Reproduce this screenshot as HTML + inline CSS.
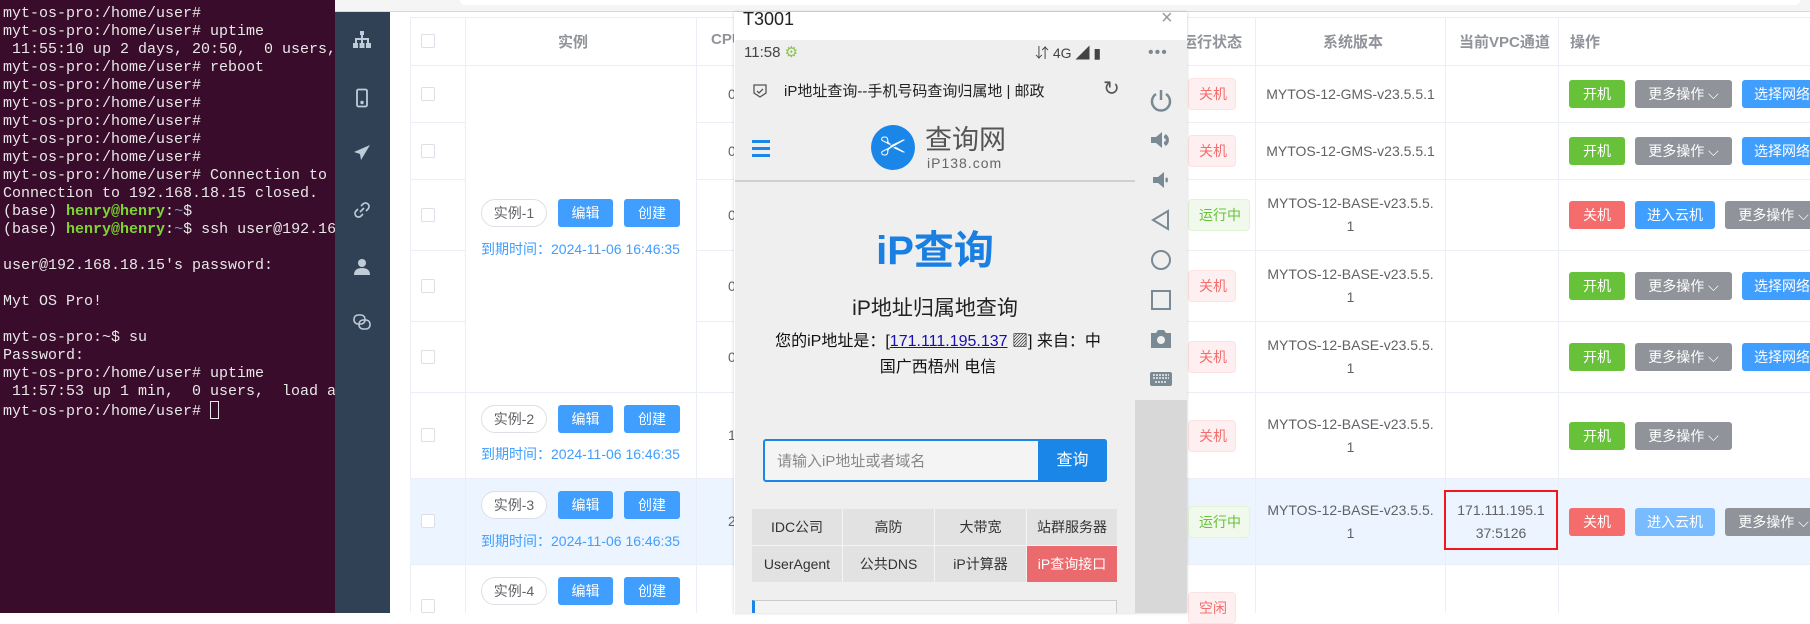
<!DOCTYPE html><html><head><meta charset="utf-8"><style>
*{margin:0;padding:0;box-sizing:border-box}
body{width:1810px;height:613px;overflow:hidden;position:relative;background:#fff;font-family:"Liberation Sans","Noto Sans CJK SC",sans-serif;font-size:14px;color:#606266}
.a{position:absolute}
#term{left:0;top:0;width:335px;height:613px;background:#380c2a;color:#e8e8e8;font:15px/18px "Liberation Mono","Noto Sans CJK SC",monospace;padding:5px 0 0 3px;white-space:pre;overflow:hidden}
.g{color:#7cd631;font-weight:bold}.b{color:#729fcf}
#side{left:335px;top:12px;width:55px;height:601px;background:#304156}
.ic{position:absolute;left:17px;width:20px;height:20px}
.hl{position:absolute;background:#ebeef5}
.cb{position:absolute;left:421px;width:14px;height:14px;border:1px solid #dcdfe6;border-radius:2px;background:#fff}
.btn{position:absolute;height:28px;line-height:28px;border-radius:3px;color:#fff;text-align:center;font-size:14px}
.bl{background:#409eff}.gr{background:#67c23a}.rd{background:#f56c6c}.gy{background:#909399}
.pill{position:absolute;left:481px;width:66px;height:28px;line-height:26px;border:1px solid #dcdfe6;border-radius:14px;text-align:center;color:#606266;background:#fff}
.exp{position:absolute;left:481px;color:#409eff;font-size:14px}
.tag{position:absolute;left:1188px;height:32px;line-height:30px;border:1px solid #fde2e2;background:#fef0f0;color:#f56c6c;border-radius:4px;padding:0 8px 0 10px;font-size:14px}
.tag.run{border-color:#e1f3d8;background:#f0f9eb;color:#67c23a}
.ver{position:absolute;left:1256px;width:189px;text-align:center;line-height:23px;color:#606266}
.cpu{position:absolute;left:728px;color:#606266}
.ctl{position:absolute;left:1149px;width:24px;height:24px}
</style></head><body>
<div id="term" class="a">myt-os-pro:/home/user#
myt-os-pro:/home/user# uptime
 11:55:10 up 2 days, 20:50,  0 users,  load
myt-os-pro:/home/user# reboot
myt-os-pro:/home/user#
myt-os-pro:/home/user#
myt-os-pro:/home/user#
myt-os-pro:/home/user#
myt-os-pro:/home/user#
myt-os-pro:/home/user# Connection to
Connection to 192.168.18.15 closed.
(base) <span class="g">henry@henry</span>:<span class="b">~</span>$
(base) <span class="g">henry@henry</span>:<span class="b">~</span>$ ssh user@192.168

user@192.168.18.15's password:

Myt OS Pro!

myt-os-pro:~$ su
Password:
myt-os-pro:/home/user# uptime
 11:57:53 up 1 min,  0 users,  load a
myt-os-pro:/home/user# <span style="display:inline-block;width:9px;height:18px;border:1px solid #e8e8e8;vertical-align:-4px"></span></div>
<div class="a" style="left:335px;top:0;width:1475px;height:12px;background:#f5f5f5;border-bottom:1px solid #d8d8d8"></div>
<div class="a" style="left:460px;top:0;width:1340px;height:5px;background:#fff;border-radius:0 0 8px 8px"></div>
<div id="side" class="a">
<svg class="ic" style="top:18px" viewBox="0 0 20 20" fill="#bfcbd9"><rect x="8" y="1" width="4" height="4"/><rect x="9" y="5" width="2" height="4"/><rect x="3" y="8" width="14" height="2"/><rect x="3" y="9" width="2" height="4"/><rect x="9" y="9" width="2" height="4"/><rect x="15" y="9" width="2" height="4"/><rect x="1" y="13" width="5" height="5"/><rect x="7.5" y="13" width="5" height="5"/><rect x="14" y="13" width="5" height="5"/></svg>
<svg class="ic" style="top:76px" viewBox="0 0 20 20" fill="none" stroke="#bfcbd9" stroke-width="1.8"><rect x="5" y="1.5" width="10" height="17" rx="1.5"/><circle cx="10" cy="14.5" r="0.8" fill="#bfcbd9"/></svg>
<svg class="ic" style="top:131px" viewBox="0 0 20 20" fill="#bfcbd9"><path d="M18 2 L2 9 L8 11 L9 17 L12 12 Z"/></svg>
<svg class="ic" style="top:188px" viewBox="0 0 20 20" fill="none" stroke="#bfcbd9" stroke-width="1.6"><path d="M8 12 L12 8 M9 6 l2-2 a3 3 0 0 1 5 5 l-2 2 M11 14 l-2 2 a3 3 0 0 1 -5 -5 l2 -2"/></svg>
<svg class="ic" style="top:245px" viewBox="0 0 20 20" fill="#bfcbd9"><circle cx="10" cy="6" r="4"/><path d="M2 18 q0-7 8-7 q8 0 8 7z"/></svg>
<svg class="ic" style="top:300px" viewBox="0 0 20 20" fill="none" stroke="#bfcbd9" stroke-width="1.6"><rect x="2" y="3" width="11" height="9" rx="4"/><rect x="7" y="8" width="11" height="9" rx="4"/></svg>
</div>
<!-- table -->
<div class="a" style="left:410px;top:17px;width:1400px;height:596px;border-left:1px solid #ebeef5;border-top:1px solid #ebeef5"></div>
<div class="a" style="left:410px;top:478px;width:1400px;height:86px;background:#ecf5ff"></div>
<div class="hl" style="left:410px;top:65px;width:1400px;height:1px"></div>
<div class="hl" style="left:410px;top:122px;width:56px;height:1px"></div><div class="hl" style="left:696px;top:122px;width:1114px;height:1px"></div>
<div class="hl" style="left:410px;top:179px;width:56px;height:1px"></div><div class="hl" style="left:696px;top:179px;width:1114px;height:1px"></div>
<div class="hl" style="left:410px;top:250px;width:56px;height:1px"></div><div class="hl" style="left:696px;top:250px;width:1114px;height:1px"></div>
<div class="hl" style="left:410px;top:321px;width:56px;height:1px"></div><div class="hl" style="left:696px;top:321px;width:1114px;height:1px"></div>
<div class="hl" style="left:410px;top:392px;width:1400px;height:1px"></div>
<div class="hl" style="left:410px;top:478px;width:1400px;height:1px"></div>
<div class="hl" style="left:410px;top:564px;width:1400px;height:1px"></div>
<div class="hl" style="left:465px;top:17px;width:1px;height:596px"></div>
<div class="hl" style="left:696px;top:17px;width:1px;height:596px"></div>
<div class="hl" style="left:1255px;top:17px;width:1px;height:596px"></div>
<div class="hl" style="left:1445px;top:17px;width:1px;height:596px"></div>
<div class="hl" style="left:1558px;top:17px;width:1px;height:596px"></div>
<div class="cb" style="top:34px"></div><div class="cb" style="top:87px"></div><div class="cb" style="top:144px"></div><div class="cb" style="top:208px"></div><div class="cb" style="top:279px"></div><div class="cb" style="top:350px"></div><div class="cb" style="top:428px"></div><div class="cb" style="top:514px"></div><div class="cb" style="top:599px"></div>
<div class="a" style="left:558px;top:31px;font-weight:bold;color:#909399;font-size:15px">实例</div>
<div class="a" style="left:711px;top:31px;font-weight:bold;color:#909399;font-size:15px">CPU</div>
<div class="a" style="left:1182px;top:31px;font-weight:bold;color:#909399;font-size:15px">运行状态</div>
<div class="a" style="left:1323px;top:31px;font-weight:bold;color:#909399;font-size:15px">系统版本</div>
<div class="a" style="left:1459px;top:31px;font-weight:bold;color:#909399;font-size:15px">当前VPC通道</div>
<div class="a" style="left:1570px;top:31px;font-weight:bold;color:#909399;font-size:15px">操作</div>
<div class="cpu" style="top:86px">0</div><div class="cpu" style="top:143px">0</div><div class="cpu" style="top:207px">0</div><div class="cpu" style="top:278px">0</div><div class="cpu" style="top:349px">0</div><div class="cpu" style="top:427px">1</div><div class="cpu" style="top:513px">2</div>
<div class="pill" style="top:199px">实例-1</div><div class="btn bl" style="left:558px;top:199px;width:55px">编辑</div><div class="btn bl" style="left:624px;top:199px;width:56px">创建</div><div class="exp" style="top:239px">到期时间：2024-11-06 16:46:35</div>
<div class="pill" style="top:405px">实例-2</div><div class="btn bl" style="left:558px;top:405px;width:55px">编辑</div><div class="btn bl" style="left:624px;top:405px;width:56px">创建</div><div class="exp" style="top:444px">到期时间：2024-11-06 16:46:35</div>
<div class="pill" style="top:491px">实例-3</div><div class="btn bl" style="left:558px;top:491px;width:55px">编辑</div><div class="btn bl" style="left:624px;top:491px;width:56px">创建</div><div class="exp" style="top:531px">到期时间：2024-11-06 16:46:35</div>
<div class="pill" style="top:577px">实例-4</div><div class="btn bl" style="left:558px;top:577px;width:55px">编辑</div><div class="btn bl" style="left:624px;top:577px;width:56px">创建</div>
<div class="tag" style="top:78px">关机</div><div class="tag" style="top:135px">关机</div><div class="tag run" style="top:199px">运行中</div><div class="tag" style="top:270px">关机</div><div class="tag" style="top:341px">关机</div><div class="tag" style="top:420px">关机</div><div class="tag run" style="top:506px">运行中</div><div class="tag" style="top:592px">空闲</div>
<div class="ver" style="top:83px">MYTOS-12-GMS-v23.5.5.1</div>
<div class="ver" style="top:140px">MYTOS-12-GMS-v23.5.5.1</div>
<div class="ver" style="top:192px">MYTOS-12-BASE-v23.5.5.<br>1</div>
<div class="ver" style="top:263px">MYTOS-12-BASE-v23.5.5.<br>1</div>
<div class="ver" style="top:334px">MYTOS-12-BASE-v23.5.5.<br>1</div>
<div class="ver" style="top:413px">MYTOS-12-BASE-v23.5.5.<br>1</div>
<div class="ver" style="top:499px">MYTOS-12-BASE-v23.5.5.<br>1</div>
<div class="a" style="left:1444px;top:490px;width:114px;height:60px;border:2px solid #f5161b"></div>
<div class="a" style="left:1446px;top:499px;width:110px;text-align:center;line-height:23px;color:#606266">171.111.195.1<br>37:5126</div>
<div class="btn gr" style="left:1569px;top:80px;width:56px">开机</div><div class="btn gy" style="left:1635px;top:80px;width:97px">更多操作 ⌵</div><div class="btn bl" style="left:1742px;top:80px;width:80px">选择网络</div>
<div class="btn gr" style="left:1569px;top:137px;width:56px">开机</div><div class="btn gy" style="left:1635px;top:137px;width:97px">更多操作 ⌵</div><div class="btn bl" style="left:1742px;top:137px;width:80px">选择网络</div>
<div class="btn rd" style="left:1569px;top:201px;width:56px">关机</div><div class="btn bl" style="left:1635px;top:201px;width:80px">进入云机</div><div class="btn gy" style="left:1725px;top:201px;width:97px">更多操作 ⌵</div>
<div class="btn gr" style="left:1569px;top:272px;width:56px">开机</div><div class="btn gy" style="left:1635px;top:272px;width:97px">更多操作 ⌵</div><div class="btn bl" style="left:1742px;top:272px;width:80px">选择网络</div>
<div class="btn gr" style="left:1569px;top:343px;width:56px">开机</div><div class="btn gy" style="left:1635px;top:343px;width:97px">更多操作 ⌵</div><div class="btn bl" style="left:1742px;top:343px;width:80px">选择网络</div>
<div class="btn gr" style="left:1569px;top:422px;width:56px">开机</div><div class="btn gy" style="left:1635px;top:422px;width:97px">更多操作 ⌵</div>
<div class="btn rd" style="left:1569px;top:508px;width:56px">关机</div><div class="btn" style="left:1635px;top:508px;width:80px;background:#79bbff">进入云机</div><div class="btn gy" style="left:1725px;top:508px;width:97px">更多操作 ⌵</div>
<!-- popup -->
<div class="a" style="left:734px;top:12px;width:453px;height:601px;background:#fff;box-shadow:0 0 3px rgba(0,0,0,.2)"></div>
<div class="a" style="left:743px;top:9px;font-size:18px;color:#222">T3001</div>
<div class="a" style="left:1161px;top:7px;font-size:20px;color:#999">×</div>
<div class="a" style="left:735px;top:40px;width:400px;height:573px;background:#efeff0;overflow:hidden">
 <div class="a" style="left:9px;top:3px;font-size:15px;color:#444">11:58 <span style="color:#8bc34a">⚙</span></div>
 <div class="a" style="left:300px;top:3px;font-size:14px;color:#444">⇵ 4G ◢ ▮</div>
 <svg class="a" style="left:17px;top:43px" width="16" height="16" viewBox="0 0 16 16" fill="none" stroke="#555" stroke-width="1.3"><path d="M2 2h12v8l-6 4-6-4z M5 8l2 2 4-4"/></svg>
 <div class="a" style="left:49px;top:40px;font-size:15px;color:#222;white-space:nowrap;width:315px;overflow:hidden">iP地址查询--手机号码查询归属地 | 邮政</div>
 <div class="a" style="left:368px;top:36px;font-size:20px;color:#555">↻</div>
 <div class="a" style="left:17px;top:100px;width:18px;height:3px;background:#1a87e8;box-shadow:0 7px 0 #1a87e8,0 14px 0 #1a87e8"></div>
 <div class="a" style="left:136px;top:85px;width:44px;height:45px;border-radius:50%;background:#1a87e8;color:#fff;font-size:26px;text-align:center;line-height:45px">✂</div>
 <div class="a" style="left:190px;top:85px;font-size:27px;color:#555;line-height:30px">查询网</div>
 <div class="a" style="left:192px;top:115px;font-size:14px;color:#666;letter-spacing:1px">iP138.com</div>
 <div class="a" style="left:0;top:140px;width:400px;height:2px;background:#d0d0d0"></div>
 <div class="a" style="left:0;top:178px;width:400px;text-align:center;font-size:40px;font-weight:bold;color:#1a7fe0">iP查询</div>
 <div class="a" style="left:0;top:252px;width:400px;text-align:center;font-size:21px;color:#222">iP地址归属地查询</div>
 <div class="a" style="left:18px;top:289px;width:370px;text-align:center;font-size:16px;color:#111;line-height:26px">您的iP地址是：[<span style="color:#1a0dab;text-decoration:underline">171.111.195.137</span> ▨] 来自：中<br>国广西梧州 电信</div>
 <div class="a" style="left:28px;top:399px;width:344px;height:43px;border:2px solid #1a87e8;border-radius:3px;background:#f4f4f4"></div>
 <div class="a" style="left:303px;top:399px;width:69px;height:43px;background:#1a87e8;color:#fff;font-size:16px;text-align:center;line-height:43px;border-radius:0 3px 3px 0">查询</div>
 <div class="a" style="left:42px;top:410px;font-size:15px;color:#888">请输入iP地址或者域名</div>
 <div class="a" style="left:17px;top:469px;width:365px;height:73px;background:#f4f4f4"></div>
 <div class="a" style="left:17px;top:469px;width:90px;height:36px;background:#e2e2e3;text-align:center;line-height:36px;color:#333">IDC公司</div>
 <div class="a" style="left:108px;top:469px;width:91px;height:36px;background:#e2e2e3;text-align:center;line-height:36px;color:#333">高防</div>
 <div class="a" style="left:200px;top:469px;width:91px;height:36px;background:#e2e2e3;text-align:center;line-height:36px;color:#333">大带宽</div>
 <div class="a" style="left:292px;top:469px;width:90px;height:36px;background:#e2e2e3;text-align:center;line-height:36px;color:#333">站群服务器</div>
 <div class="a" style="left:17px;top:506px;width:90px;height:36px;background:#e2e2e3;text-align:center;line-height:36px;color:#333">UserAgent</div>
 <div class="a" style="left:108px;top:506px;width:91px;height:36px;background:#e2e2e3;text-align:center;line-height:36px;color:#333">公共DNS</div>
 <div class="a" style="left:200px;top:506px;width:91px;height:36px;background:#e2e2e3;text-align:center;line-height:36px;color:#333">iP计算器</div>
 <div class="a" style="left:292px;top:506px;width:90px;height:36px;background:#eb6a6d;text-align:center;line-height:36px;color:#fff">iP查询接口</div>
 <div class="a" style="left:17px;top:560px;width:365px;height:20px;border:1px solid #ccc;border-left:3px solid #1a87e8;background:#f4f4f4"></div>
</div>
<div class="a" style="left:1135px;top:40px;width:52px;height:360px;background:#efeff0"></div>
<div class="a" style="left:1135px;top:400px;width:52px;height:213px;background:#d8d8d8"></div>
<div class="a" style="left:1148px;top:44px;font-size:16px;color:#7a8a94;letter-spacing:1px">•••</div>
<svg class="ctl" style="top:88px" viewBox="0 0 24 24" fill="none" stroke="#7a8a94" stroke-width="2.5"><path d="M7 6a9 9 0 1 0 10 0M12 2v10"/></svg>
<svg class="ctl" style="top:128px" viewBox="0 0 24 24" fill="#7a8a94"><path d="M2 9h5l6-5v16l-6-5H2z"/><path d="M16 7a6 6 0 0 1 0 10M15 9a3 3 0 0 1 0 6" stroke="#7a8a94" stroke-width="2.5" fill="none"/></svg>
<svg class="ctl" style="top:168px" viewBox="0 0 24 24" fill="#7a8a94"><path d="M4 9h5l6-5v16l-6-5H4z"/><path d="M17 10a3 3 0 0 1 0 4" stroke="#7a8a94" stroke-width="2.5" fill="none"/></svg>
<svg class="ctl" style="top:208px" viewBox="0 0 24 24" fill="none" stroke="#7a8a94" stroke-width="2"><path d="M19 3L4 12l15 9z"/></svg>
<svg class="ctl" style="top:248px" viewBox="0 0 24 24" fill="none" stroke="#7a8a94" stroke-width="2"><circle cx="12" cy="12" r="9"/></svg>
<svg class="ctl" style="top:288px" viewBox="0 0 24 24" fill="none" stroke="#7a8a94" stroke-width="2"><rect x="3" y="3" width="18" height="18"/></svg>
<svg class="ctl" style="top:327px" viewBox="0 0 24 24" fill="#7a8a94"><path d="M2 6h5l2-3h6l2 3h5v15H2z"/><circle cx="12" cy="13" r="4" fill="#efeff0"/></svg>
<svg class="ctl" style="top:367px" viewBox="0 0 24 24" fill="#7a8a94"><rect x="1" y="5" width="22" height="14" rx="2"/><path d="M4 8h16M4 11h16M6 15h12" stroke="#efeff0" stroke-width="1.5" stroke-dasharray="2 1"/></svg>
</body></html>
